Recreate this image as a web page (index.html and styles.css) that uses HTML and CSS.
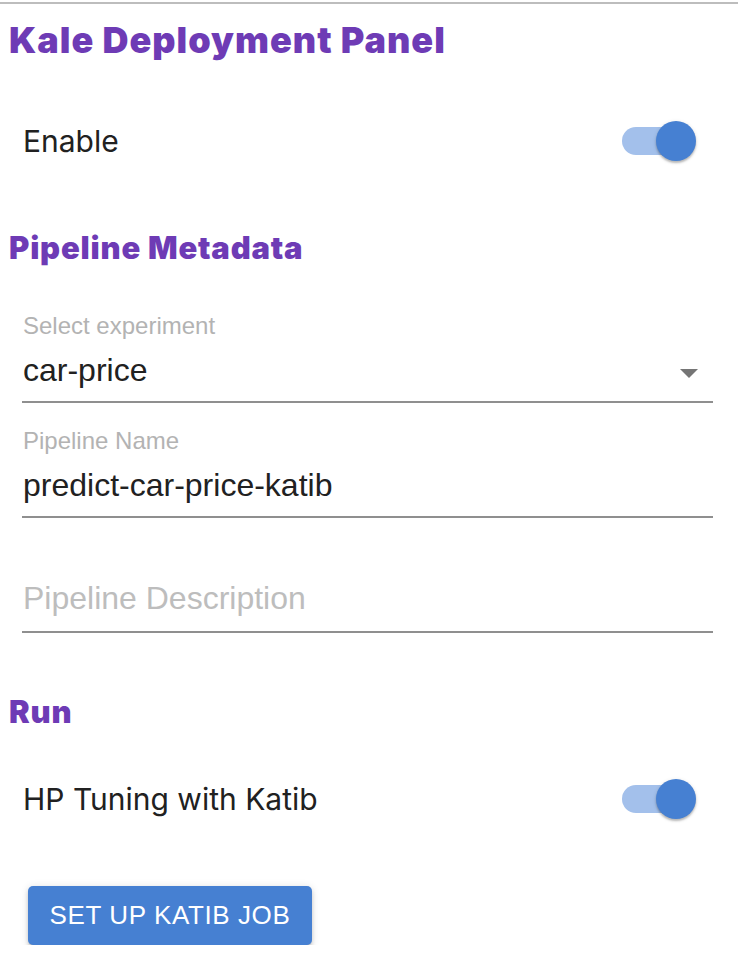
FILE: index.html
```html
<!DOCTYPE html>
<html>
<head>
<meta charset="utf-8">
<link rel="stylesheet" href="styles.css">
</head>
<body>
<div class="panel">
  <h1 class="title">Kale Deployment Panel</h1>
  <div class="toggle-row">
    <span class="toggle-label">Enable</span>
    <span class="switch"><span class="track"></span><span class="thumb"></span></span>
  </div>
  <h2 class="section section-meta">Pipeline Metadata</h2>
  <div class="field">
    <div class="field-label">Select experiment</div>
    <div class="field-value select">
      <span>car-price</span>
      <svg class="caret" width="18" height="9" viewBox="0 0 18 9"><path d="M0 0 L18 0 L9 9 Z" fill="#757575"/></svg>
    </div>
  </div>
  <div class="field">
    <div class="field-label">Pipeline Name</div>
    <div class="field-value"><span>predict-car-price-katib</span></div>
  </div>
  <div class="field">
    <div class="field-label"></div>
    <div class="field-value field-value-desc"><span class="placeholder">Pipeline Description</span></div>
  </div>
  <h2 class="section section-run">Run</h2>
  <div class="toggle-row toggle-row-katib">
    <span class="toggle-label">HP Tuning with Katib</span>
    <span class="switch"><span class="track"></span><span class="thumb"></span></span>
  </div>
  <button class="btn">SET UP KATIB JOB</button>
</div>
</body>
</html>
```
FILE: styles.css
```css
html, body {
  margin: 0;
  padding: 0;
  background: #ffffff;
}
.panel {
  margin-top: 2px;
  border-top: 2px solid #bdbdbd;
  display: flex;
  flex-direction: column;
}
.title {
  margin: 0;
  padding-left: 9px;
  height: 72px;
  line-height: 72px;
  font-family: Inter, sans-serif;
  font-weight: 900;
  font-size: 36px;
  letter-spacing: 1px;
  color: #6e3bb5;
}
.toggle-row {
  display: flex;
  align-items: center;
  justify-content: space-between;
  height: 60px;
  margin-top: 35px;
  padding-left: 23px;
  padding-right: 42px;
}
.toggle-label {
  font-family: Inter, sans-serif;
  font-size: 30px;
  color: #212121;
}
.switch {
  position: relative;
  width: 74px;
  height: 40px;
  display: block;
}
.track {
  position: absolute;
  left: 0;
  top: 6px;
  width: 68px;
  height: 28px;
  border-radius: 14px;
  background: #a3c0eb;
}
.thumb {
  position: absolute;
  right: 0;
  top: 0;
  width: 40px;
  height: 40px;
  border-radius: 50%;
  background: #4680d2;
  box-shadow: 0 2px 2px rgba(0,0,0,0.22), 0 1px 4px rgba(0,0,0,0.12);
}
.section {
  margin: 0;
  padding-left: 9px;
  font-family: Inter, sans-serif;
  font-weight: 900;
  font-size: 31px;
  letter-spacing: 0.8px;
  color: #6e3bb5;
  line-height: 44px;
}
.section-meta {
  margin-top: 55px;
  margin-bottom: 41px;
}
.section-run {
  margin-top: 34px;
}
.field {
  margin: 0 25px 23px 22px;
  display: flex;
  flex-direction: column;
  border-bottom: 2px solid #8f8f8f;
}
.field-label {
  height: 30px;
  line-height: 30px;
  padding-left: 1px;
  font-family: "Liberation Sans", Arial, sans-serif;
  font-size: 24px;
  color: #b3b3b3;
}
.field-value {
  margin-top: 7px;
  height: 44px;
  line-height: 44px;
  padding-bottom: 9px;
  padding-left: 1px;
  display: flex;
  align-items: center;
  justify-content: space-between;
  font-family: "Liberation Sans", Arial, sans-serif;
  font-size: 32px;
  color: #212121;
}
.field-value-desc {
  margin-top: 5px;
  padding-bottom: 11px;
}
.caret {
  margin-right: 15px;
  margin-top: 6px;
}
.placeholder {
  color: #bdbdbd;
}
.toggle-row-katib {
  margin-top: 35px;
}
.btn {
  align-self: flex-start;
  margin-left: 28px;
  margin-top: 57px;
  width: 284px;
  height: 59px;
  border: none;
  border-radius: 5px;
  background: #4680d2;
  color: #ffffff;
  font-family: "Liberation Sans", Arial, sans-serif;
  font-size: 26px;
  letter-spacing: 0.6px;
  box-shadow: 0 3px 3px -2px rgba(0,0,0,0.2), 0 3px 4px 0 rgba(0,0,0,0.14), 0 1px 8px 0 rgba(0,0,0,0.12);
  padding: 0;
}
```
